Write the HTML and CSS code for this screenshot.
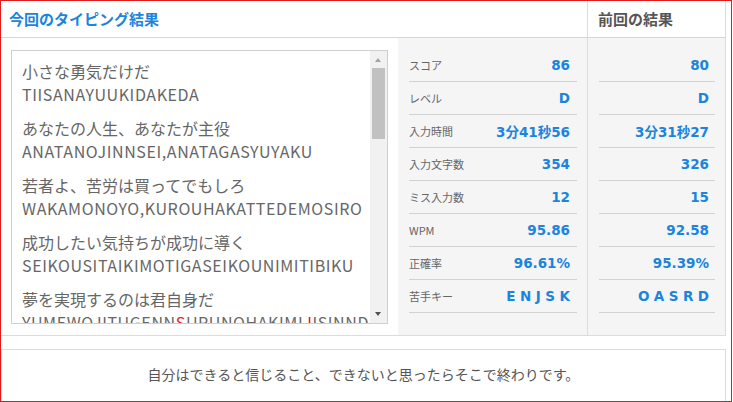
FILE: index.html
```html
<!DOCTYPE html>
<html lang="ja">
<head>
<meta charset="utf-8">
<title>タイピング結果</title>
<link rel="stylesheet" href="styles.css">
</head>
<body>
<div class="frame">
  <div class="panel">
    <div class="head head-now">今回のタイピング結果</div>
    <div class="head head-prev">前回の結果</div>
    <div class="body-now">
      <div class="log-cell">
        <div class="log">
          <div class="log-text">
            <p>小さな勇気だけだ<br><span class="roma">TIISANAYUUKIDAKEDA</span></p>
            <p>あなたの人生、あなたが主役<br><span class="roma">ANATANOJINNSEI,ANATAGASYUYAKU</span></p>
            <p>若者よ、苦労は買ってでもしろ<br><span class="roma">WAKAMONOYO,KUROUHAKATTEDEMOSIRO</span></p>
            <p>成功したい気持ちが成功に導く<br><span class="roma">SEIKOUSITAIKIMOTIGASEIKOUNIMITIBIKU</span></p>
            <p>夢を実現するのは君自身だ<br><span class="roma">YUMEWOJITUGENN<span class="miss">S</span>URUNOHAKIMI<span class="miss">J</span>ISINNDA</span></p>
          </div>
          <div class="scrollbar">
            <div class="arrow arrow-up"></div>
            <div class="track"><div class="thumb"></div></div>
            <div class="arrow arrow-down"></div>
          </div>
        </div>
      </div>
      <ul class="stats stats-now">
        <li><span class="label">スコア</span><span class="value">86</span></li>
        <li><span class="label">レベル</span><span class="value">D</span></li>
        <li><span class="label">入力時間</span><span class="value">3分41秒56</span></li>
        <li><span class="label">入力文字数</span><span class="value">354</span></li>
        <li><span class="label">ミス入力数</span><span class="value">12</span></li>
        <li><span class="label">WPM</span><span class="value">95.86</span></li>
        <li><span class="label">正確率</span><span class="value">96.61%</span></li>
        <li><span class="label">苦手キー</span><span class="value keys">ENJSK</span></li>
      </ul>
    </div>
    <ul class="stats stats-prev">
      <li><span class="value">80</span></li>
      <li><span class="value">D</span></li>
      <li><span class="value">3分31秒27</span></li>
      <li><span class="value">326</span></li>
      <li><span class="value">15</span></li>
      <li><span class="value">92.58</span></li>
      <li><span class="value">95.39%</span></li>
      <li><span class="value keys">OASRD</span></li>
    </ul>
  </div>
  <div class="quote">自分はできると信じること、できないと思ったらそこで終わりです。</div>
</div>
</body>
</html>
```

FILE: styles.css
```css
* { box-sizing: border-box; }
html, body { margin: 0; padding: 0; background: #fff; }
body { font-family: "Noto Sans CJK JP", sans-serif; color: #666; }

.frame {
  width: 732px;
  height: 402px;
  border: 1px solid #e01b1b;
  overflow: hidden;
}

.panel {
  width: 725px;
  display: grid;
  grid-template-columns: 586px 138px;
  grid-template-rows: 37px 297px;
  border-right: 1px solid #dcdcdc;
  border-bottom: 1px solid #dcdcdc;
}

.head {
  border-bottom: 1px solid #d6d6d6;
  font-size: 15px;
  font-weight: bold;
  line-height: 35px;
}
.head-now { color: #1b84dc; padding-left: 8px; }
.head-prev { color: #555; padding-left: 10px; border-left: 1px solid #dcdcdc; }

.body-now {
  display: flex;
}

.log-cell {
  width: 397px;
  background: #fff;
  padding: 12px 10px 0 10px;
}

.log {
  height: 274px;
  border: 1px solid #cfcfcf;
  display: flex;
}

.log-text {
  flex: 1;
  overflow: hidden;
  padding: 9px 0 0 10px;
  font-size: 16px;
  line-height: 23px;
  color: #666;
  white-space: nowrap;
}
.log-text p { margin: 0 0 11px; }
.roma { letter-spacing: 0.6px; }
.miss { color: #e02020; }

.scrollbar {
  width: 17px;
  background: #f1f1f1;
  display: flex;
  flex-direction: column;
  align-items: center;
}
.arrow { height: 17px; width: 17px; position: relative; }
.arrow::after {
  content: "";
  position: absolute;
  left: 5px;
  width: 0; height: 0;
  border-left: 3.5px solid transparent;
  border-right: 3.5px solid transparent;
}
.arrow-up::after { top: 7px; border-bottom: 4px solid #a3a3a3; }
.arrow-down::after { top: 6px; border-top: 4px solid #505050; }
.track { flex: 1; width: 17px; padding: 0 2px; }
.thumb { height: 71px; background: #c1c1c1; }

.stats {
  list-style: none;
  margin: 0;
  background: #f5f5f5;
  padding: 11px 10px 0 11px;
}
.stats-now { width: 189px; }
.stats-prev { border-left: 1px solid #dcdcdc; }

.stats li {
  height: 33px;
  border-bottom: 1px solid #d2d2d2;
  display: flex;
  align-items: center;
  justify-content: space-between;
  padding-right: 7px;
}
.stats-prev li { justify-content: flex-end; padding-right: 6px; }

.label { font-size: 11px; color: #666; }
.value {
  font-family: "DejaVu Sans", "Noto Sans CJK JP", sans-serif;
  font-size: 13.5px;
  font-weight: bold;
  color: #1b84dc;
}
.keys { letter-spacing: 4.5px; margin-right: -4.5px; }

.quote {
  width: 725px;
  height: 53px;
  margin-top: 13px;
  border: 1px solid #dcdcdc;
  display: flex;
  align-items: center;
  justify-content: center;
  padding-bottom: 3px;
  font-size: 14px;
  color: #555;
}
```
